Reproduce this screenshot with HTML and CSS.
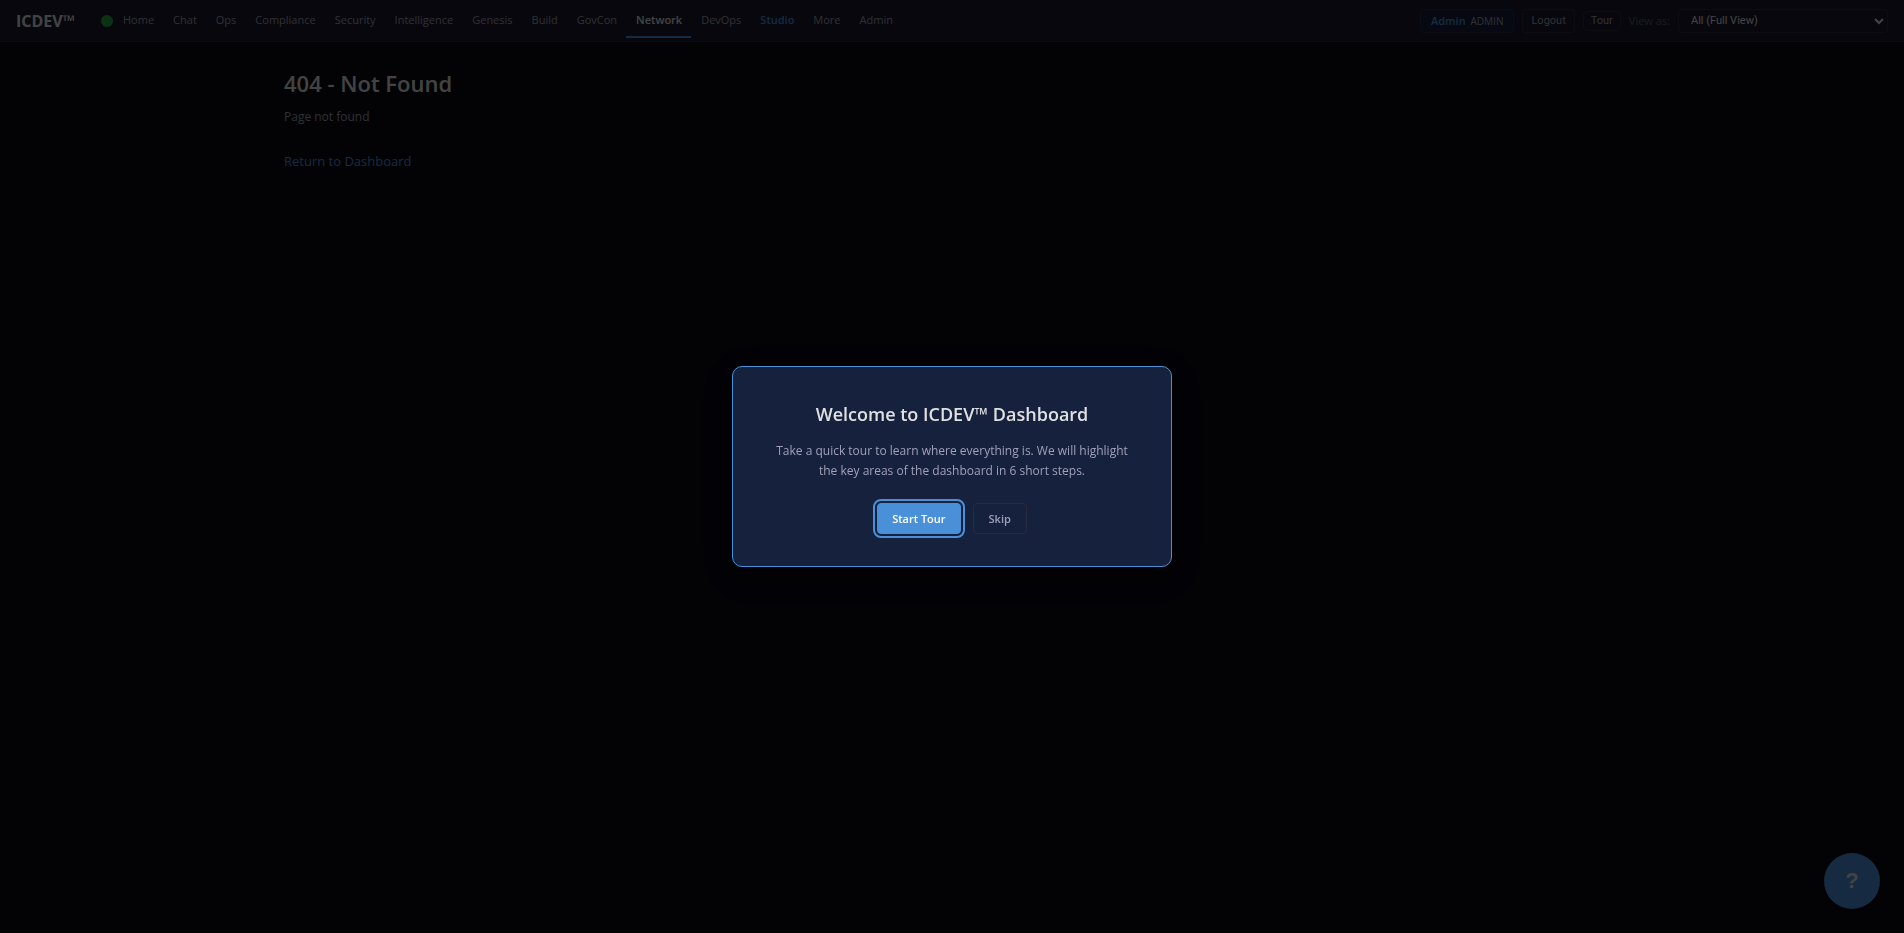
FILE: index.html
```html
<!doctype html>
<html lang="en">
<head>
	<meta charset="UTF-8">
	<title>404 - Not Found</title>
	<link rel="stylesheet" href="styles.css">
</head>
<body>
	<header class="navbar">
		<a href="#" class="brand">ICDEV™</a>
		<span class="status"></span>
		<nav class="menu">
			<a href="#">Home</a>
			<a href="#">Chat</a>
			<a href="#">Ops</a>
			<a href="#">Compliance</a>
			<a href="#">Security</a>
			<a href="#">Intelligence</a>
			<a href="#">Genesis</a>
			<a href="#">Build</a>
			<a href="#">GovCon</a>
			<a href="#" class="active">Network</a>
			<a href="#">DevOps</a>
			<a href="#" class="studio">Studio</a>
			<a href="#">More</a>
			<a href="#">Admin</a>
		</nav>
		<div class="tools">
			<a href="#" class="user"><b>Admin</b> <small>ADMIN</small></a>
			<a href="#" class="logout">Logout</a>
			<button type="button" class="tour">Tour</button>
			<label for="role">View as:</label>
			<div class="role-box">
				<select id="role" class="role">
					<option>All (Full View)</option>
				</select>
				<svg class="arrow" width="10" height="7" viewBox="0 0 10 7"><path d="M1 1l4 4 4-4" fill="none" stroke="currentColor" stroke-width="2"/></svg>
			</div>
		</div>
	</header>

	<main class="container">
		<h1>404 - Not Found</h1>
		<p class="subtitle">Page not found</p>
		<a href="#" class="back">Return to Dashboard</a>
	</main>

	<button type="button" class="help" aria-label="Help">?</button>

	<!-- welcome tour -->
	<div class="overlay">
		<div class="welcome" role="dialog" aria-labelledby="welcome-title">
			<h2 id="welcome-title">Welcome to ICDEV™ Dashboard</h2>
			<p>Take a quick tour to learn where everything is. We will highlight the key areas of the dashboard in 6 short steps.</p>
			<div class="actions">
				<button type="button" class="btn start">Start Tour</button>
				<button type="button" class="btn skip">Skip</button>
			</div>
		</div>
	</div>
</body>
</html>
```
FILE: styles.css
```css
*{box-sizing:border-box;margin:0;padding:0;}

body{
	min-height:100vh;
	background:#0a0a16;
	color:#e0e0e0;
	font-family:"Segoe UI","Open Sans","Noto Sans",sans-serif;
	font-size:14px;
}
a{color:#4a90d9;text-decoration:none;}
button,select{font-family:inherit;cursor:pointer;}

/* navbar */
.navbar{
	display:flex;
	align-items:center;
	height:42px;
	padding:0 16px;
	background:#1a1a2e;
	border-bottom:1px solid #2a2a3e;
}
.brand{
	width:85px;
	color:#e0e0e0;
	font-size:16px;
	font-weight:700;
}
.status{
	width:12px;height:12px;
	border-radius:50%;
	background:#28a745;
}
.menu{display:flex;}
.menu a{
	padding:8px 9px 7px 10px;
	border-bottom:2px solid transparent;
	color:#a0a0b0;
	font-size:11px;
	line-height:18px;
}
.menu .active{
	color:#e0e0e0;
	font-weight:600;
	border-bottom-color:#4a90d9;
}
.menu .studio{color:#4a90d9;font-weight:600;}

.tools{
	display:flex;
	align-items:center;
	gap:8px;
	margin-left:auto;
	font-size:11px;
}
.user,.logout,.tour,.role{
	border:1px solid #2a2a3e;
	border-radius:4px;
}
.user{
	height:24px;
	padding:0 10px;
	line-height:22px;
	background:#16213e;
}
.user b{font-size:11px;font-weight:600;}
.user small{margin-left:2px;color:#a0a0b0;font-size:10px;}
.logout{
	height:24px;
	padding:0 8px;
	color:#a0a0b0;
	font-family:Roboto,sans-serif;
	line-height:22px;
}
.tour{
	height:20px;
	padding:0 7px;
	background:transparent;
	color:#a0a0b0;
	font-family:Roboto,sans-serif;
	font-size:11px;
}
.tools label{color:#5a5a6e;}
.role-box{position:relative;}
.role{
	width:210px;height:24px;
	padding:0 12px;
	background:#1a1a2e;
	color:#e0e0e0;
	font-family:Roboto,sans-serif;
	font-size:11px;
	appearance:none;
}
.arrow{
	position:absolute;
	top:9px;right:4px;
	pointer-events:none;
}

/* page */
.container{
	max-width:1400px;
	margin:0 auto;
	padding:24px 32px;
}
.container h1{
	font-size:22px;
	font-weight:600;
	line-height:34px;
}
.subtitle{
	margin-bottom:17px;
	color:#a0a0b0;
	font-size:12px;
	line-height:34px;
}
.back{font-size:13px;}

.help{
	position:fixed;
	right:24px;bottom:24px;
	width:56px;height:56px;
	border:0;
	border-radius:50%;
	background:#4a90d9;
	color:#e0e0e0;
	font:700 22px "Liberation Sans",Arial,sans-serif;
}

/* overlay */
.overlay{
	position:fixed;
	top:0;right:0;bottom:0;left:0;
	display:flex;
	align-items:center;
	justify-content:center;
	background:rgba(0,0,0,.7);
}
.welcome{
	width:440px;
	padding:32px 36px;
	border:1px solid #4a90d9;
	border-radius:10px;
	background:#16213e;
	box-shadow:0 8px 32px rgba(0,0,0,.5);
	text-align:center;
}
.welcome h2{
	margin-bottom:12px;
	font-size:18px;
	font-weight:600;
	line-height:30px;
}
.welcome p{
	margin-bottom:22px;
	color:#a0a0b8;
	font-size:12px;
	line-height:20px;
}
.actions{
	display:flex;
	justify-content:center;
	gap:12px;
}
.btn{
	height:31px;
	padding:0 14px;
	border:1px solid #4a90d9;
	border-radius:4px;
	font-size:11px;
	font-weight:600;
}
.start{
	background:#4a90d9;
	color:#fff;
	outline:2px solid #4a90d9;
	outline-offset:2px;
}
.skip{
	padding:0 15px;
	border-color:#2a2a3e;
	background:transparent;
	color:#a0a0b8;
}
```
